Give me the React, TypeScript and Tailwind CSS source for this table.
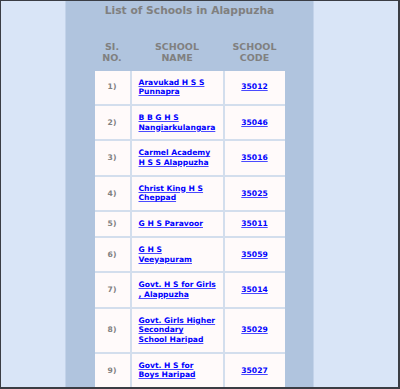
import React from "react";

const rows: { lines: string[]; code: string }[] = [
  { lines: ["Aravukad H S S", "Punnapra"], code: "35012" },
  { lines: ["B B G H S", "Nangiarkulangara"], code: "35046" },
  { lines: ["Carmel Academy", "H S S Alappuzha"], code: "35016" },
  { lines: ["Christ King H S", "Cheppad"], code: "35025" },
  { lines: ["G H S Paravoor"], code: "35011" },
  { lines: ["G H S", "Veeyapuram"], code: "35059" },
  { lines: ["Govt. H S for Girls", ", Alappuzha"], code: "35014" },
  { lines: ["Govt. Girls Higher", "Secondary", "School Haripad"], code: "35029" },
  { lines: ["Govt. H S for", "Boys Haripad"], code: "35027" },
];

export default function App() {
  return (
    <div className="w-[400px] h-[389px] overflow-hidden bg-[#d9e5f7] border-l border-t border-r-2 border-b-2 border-[#3a3d44] font-['DejaVu_Sans',sans-serif] flex">
      <div className="ml-[64px] w-[249px] h-full bg-[#b0c4de] border-x border-[#c3d3ea] flex flex-col items-center">
        <div className="pt-[1.5px] h-[17.5px] leading-[16px] text-[10.7px] font-bold text-[#808080] text-center whitespace-nowrap">
          List of Schools in Alappuzha
        </div>
        <div className="mt-[22.5px] grid grid-cols-[35px_91px_60px] gap-x-[2px] text-[9.5px] leading-[11px] font-bold text-[#808080] text-center">
          <div>SI.<br />NO.</div>
          <div>SCHOOL<br />NAME</div>
          <div>SCHOOL<br />CODE</div>
        </div>
        <div className="mt-[7.5px] grid grid-cols-[35px_91px_60px] gap-[2px] bg-[#d3deed] text-[7.6px] leading-[9.7px] font-bold">
          {rows.map((r, i) => (
            <React.Fragment key={i}>
              <div className="bg-[#fffafa] flex items-center justify-center py-[7px] text-[#808080]">
                {i + 1})
              </div>
              <div className="bg-[#fffafa] flex items-center py-[7px] pl-[7px] whitespace-nowrap">
                <a href="#" className="text-[#0000ff] underline decoration-[#4a4aff]">
                  {r.lines.map((l, j) => (
                    <React.Fragment key={j}>
                      {j > 0 && <br />}
                      {l}
                    </React.Fragment>
                  ))}
                </a>
              </div>
              <div className="bg-[#fffafa] flex items-center justify-center py-[7px]">
                <a href="#" className="text-[#0000ff] underline decoration-[#4a4aff]">{r.code}</a>
              </div>
            </React.Fragment>
          ))}
        </div>
      </div>
    </div>
  );
}
